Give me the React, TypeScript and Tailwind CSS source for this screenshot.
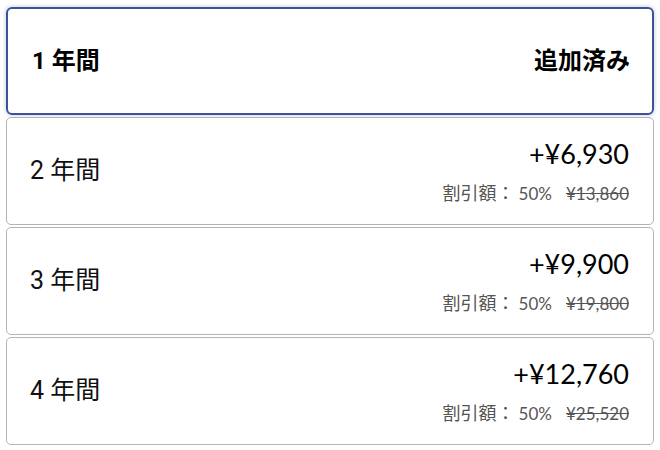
import React from "react";

type Plan = {
  years: number;
  price: string;
  original: string;
};

const plans: Plan[] = [
  { years: 2, price: "+¥6,930", original: "¥13,860" },
  { years: 3, price: "+¥9,900", original: "¥19,800" },
  { years: 4, price: "+¥12,760", original: "¥25,520" },
];

const jp = "font-['Roboto','Noto_Sans_CJK_JP',sans-serif]";
const lato = "font-['Lato','Noto_Sans_CJK_JP',sans-serif]";

const App: React.FC = () => {
  return (
    <div className="w-[660px] h-[450px] bg-white px-[6px] pt-[7px] flex flex-col gap-[2px]">
      <div className="h-[108px] flex flex-row items-center justify-between border-2 border-[#3d5299] rounded-[6px] shadow-[0_0_4px_rgba(60,80,150,0.35)] pl-[24px] pr-[22px]">
        <span className={`${jp} text-[24px] font-bold text-black`}>1 年間</span>
        <span className={`${jp} text-[24px] font-bold text-black`}>追加済み</span>
      </div>
      {plans.map((p) => (
        <div
          key={p.years}
          className="h-[108px] flex flex-row items-center justify-between border border-[#b4b4b8] rounded-[5px] pl-[23px] pr-[24px]"
        >
          <span className={`${jp} text-[25px] text-[#111]`}>{p.years} 年間</span>
          <div className="flex flex-col items-end">
            <span className={`${lato} text-[27px] leading-[32px] text-black`}>{p.price}</span>
            <div className={`${lato} mt-[14px] text-[17px] leading-[20px] text-[#555] flex flex-row items-baseline`}>
              <span className={`${jp} text-[18px]`}>割引額：</span>
              <span className="ml-[4px]">50%</span>
              <span className="ml-[14px] line-through">{p.original}</span>
            </div>
          </div>
        </div>
      ))}
    </div>
  );
};

export default App;
